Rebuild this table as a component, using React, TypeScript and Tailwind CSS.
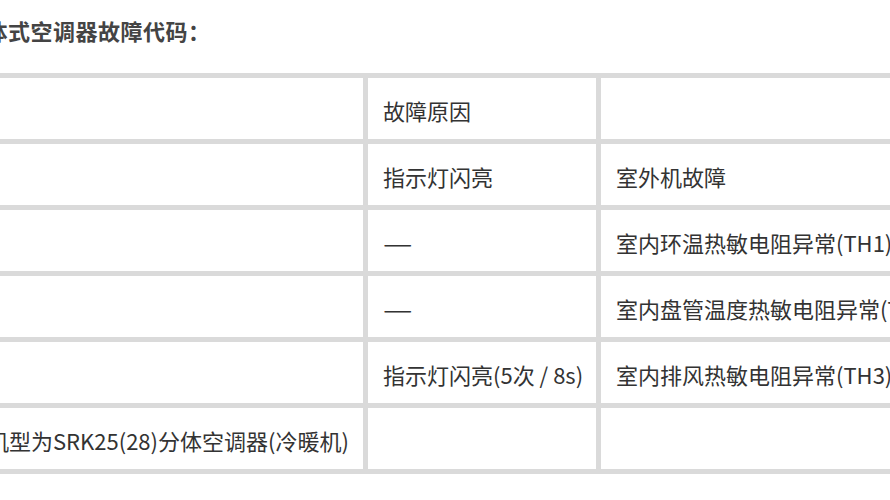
const ROWS: [string, string, string][] = [
  ["", "故障原因", ""],
  ["", "指示灯闪亮", "室外机故障"],
  ["", "—", "室内环温热敏电阻异常(TH1)"],
  ["", "—", "室内盘管温度热敏电阻异常(TH2)"],
  ["", "指示灯闪亮(5次 / 8s)", "室内排风热敏电阻异常(TH3)"],
  ["机型为SRK25(28)分体空调器(冷暖机)", "", ""],
];

function Cell({ text }: { text: string }) {
  return (
    <div className="flex h-[61px] items-center bg-white pl-[15px] pt-[3px] text-[22px] whitespace-nowrap">
      {text === "—" ? (
        <span className="inline-block origin-left scale-x-[1.5]">—</span>
      ) : (
        text
      )}
    </div>
  );
}

export default function App() {
  return (
    <div
      className="w-[890px] h-[500px] overflow-hidden bg-white text-[#333]"
      style={{ fontFamily: '"Noto Sans CJK SC", "Liberation Sans", sans-serif' }}
    >
      {/* 标题 */}
      <div className="-ml-[37px] pt-[15px] text-[22px] leading-[30px] font-bold tracking-[0.5px] text-[#444] whitespace-nowrap">
        分体式空调器故障代码：
      </div>

      {/* 表格 */}
      <div className="mt-[28px] -ml-[33px] grid w-max grid-cols-[391px_228px_400px] gap-[5px] bg-[#dadada] p-[5px]">
        {ROWS.map((row, i) => row.map((cell, j) => <Cell key={`${i}-${j}`} text={cell} />))}
      </div>
    </div>
  );
}
